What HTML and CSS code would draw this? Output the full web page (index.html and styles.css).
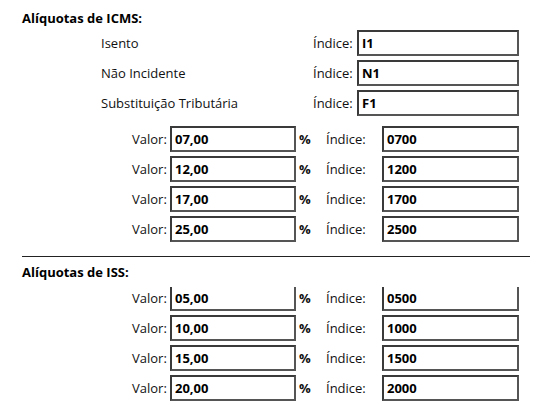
FILE: index.html
```html
<!DOCTYPE html>
<html lang="pt-BR">
<head>
  <meta charset="UTF-8" />
  <title>Alíquotas</title>
  <link rel="stylesheet" href="styles.css">
</head>
<body>
  <div class="page">
    <h2 class="title">Alíquotas de ICMS:</h2>

    <div class="codes">
      <span class="code-name">Isento</span>
      <span class="lbl">Índice:</span>
      <input class="field" readonly value="I1">

      <span class="code-name">Não Incidente</span>
      <span class="lbl">Índice:</span>
      <input class="field" readonly value="N1">

      <span class="code-name">Substituição Tributária</span>
      <span class="lbl">Índice:</span>
      <input class="field" readonly value="F1">
    </div>

    <div class="rates">
      <span class="lbl">Valor:</span><input class="field" readonly value="07,00"><span class="pct">%</span><span class="lbl">Índice:</span><input class="field" readonly value="0700">
      <span class="lbl">Valor:</span><input class="field" readonly value="12,00"><span class="pct">%</span><span class="lbl">Índice:</span><input class="field" readonly value="1200">
      <span class="lbl">Valor:</span><input class="field" readonly value="17,00"><span class="pct">%</span><span class="lbl">Índice:</span><input class="field" readonly value="1700">
      <span class="lbl">Valor:</span><input class="field" readonly value="25,00"><span class="pct">%</span><span class="lbl">Índice:</span><input class="field" readonly value="2500">
    </div>

    <hr class="divider">

    <h2 class="title iss">Alíquotas de ISS:</h2>

    <div class="scroll-box">
      <div class="rates scrolled">
        <span class="lbl">Valor:</span><input class="field" readonly value="05,00"><span class="pct">%</span><span class="lbl">Índice:</span><input class="field" readonly value="0500">
        <span class="lbl">Valor:</span><input class="field" readonly value="10,00"><span class="pct">%</span><span class="lbl">Índice:</span><input class="field" readonly value="1000">
        <span class="lbl">Valor:</span><input class="field" readonly value="15,00"><span class="pct">%</span><span class="lbl">Índice:</span><input class="field" readonly value="1500">
        <span class="lbl">Valor:</span><input class="field" readonly value="20,00"><span class="pct">%</span><span class="lbl">Índice:</span><input class="field" readonly value="2000">
      </div>
    </div>
  </div>
</body>
</html>
```

FILE: styles.css
```css
* {
  margin: 0;
  padding: 0;
  box-sizing: border-box;
  font-family: 'Open Sans', 'DejaVu Sans', sans-serif;
}

body {
  background: #fff;
  color: #111;
  font-size: 13px;
}

.page {
  padding: 0 8px 0 22px;
  height: 408px;
  overflow: hidden;
}

.title {
  font-size: 13px;
  font-weight: 700;
  line-height: 16px;
  margin-top: 10px;
  margin-bottom: 4px;
  color: #000;
}

.title.iss {
  margin-top: 7px;
  margin-bottom: 7px;
}

.codes {
  display: grid;
  grid-template-columns: 212px 44px 162px;
  grid-auto-rows: 26px;
  row-gap: 4px;
  padding-left: 79px;
  align-items: center;
}

.rates {
  display: grid;
  grid-template-columns: 38px 126px 30px 56px 137px;
  grid-auto-rows: 26px;
  row-gap: 4px;
  padding-left: 110px;
  margin-top: 10px;
  align-items: center;
}

.lbl, .code-name {
  line-height: 26px;
  white-space: nowrap;
}

.pct {
  padding-left: 3px;
  font-weight: 700;
}

.field {
  height: 26px;
  width: 100%;
  border: 2px solid #3a3a3a;
  border-right-color: #555;
  border-bottom-color: #555;
  background: #fff;
  padding: 0 3px;
  font-size: 13px;
  font-weight: 700;
  color: #000;
  outline: none;
}

.divider {
  border: none;
  border-top: 1px solid #222;
  margin-top: 14px;
}

/* list is scrolled down a touch, first row's top edge is hidden */
.scroll-box {
  overflow: hidden;
}

.rates.scrolled {
  margin-top: -2px;
}
```
